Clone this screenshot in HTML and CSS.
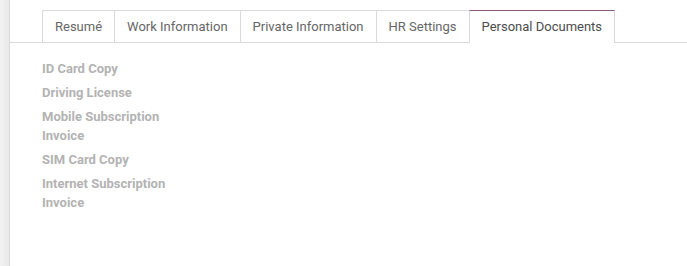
FILE: index.html
```html
<!DOCTYPE html>
<html lang="en">
<head>
    <meta charset="UTF-8">
    <title>Employee - Personal Documents</title>
    <link rel="stylesheet" href="styles.css">
</head>
<body>
    <div class="page">
        <div class="side-strip"></div>
        <div class="sheet">
            <ul class="tabs">
                <li class="tab">Resumé</li>
                <li class="tab">Work Information</li>
                <li class="tab">Private Information</li>
                <li class="tab">HR Settings</li>
                <li class="tab active">Personal Documents</li>
            </ul>
            <div class="tab-pane">
                <div class="doc-label">ID Card Copy</div>
                <div class="doc-label">Driving License</div>
                <div class="doc-label">Mobile Subscription Invoice</div>
                <div class="doc-label">SIM Card Copy</div>
                <div class="doc-label">Internet Subscription Invoice</div>
            </div>
        </div>
    </div>
</body>
</html>
```

FILE: styles.css
```css
body {
    margin: 0;
    font-family: Roboto, 'Noto Sans', sans-serif;
    background-color: #fff;
}
.page {
    display: flex;
    height: 266px;
}
.side-strip {
    width: 9px;
    background: linear-gradient(to right, #f2f2f2, #e9e9e9);
    border-right: 1px solid #d9d9d9;
}
.sheet {
    flex: 1;
    background-color: #fff;
    padding-top: 10px;
}
.tabs {
    display: flex;
    list-style: none;
    margin: 0;
    padding: 0 0 0 32px;
    border-bottom: 1px solid #d8dadd;
}
.tab {
    font-size: 13px;
    color: #666;
    height: 31px;
    line-height: 32px;
    padding: 0 12px;
    border: 1px solid #d8dadd;
    border-bottom: none;
    margin-left: -1px;
    margin-bottom: -1px;
    background-color: #fff;
}
.tab:first-child {
    margin-left: 0;
}
.tab.active {
    color: #4c4c4c;
    border-top-color: #875a7b;
    height: 32px;
    position: relative;
    z-index: 1;
}
.tab-pane {
    padding: 16px 0 0 32px;
    display: flex;
    flex-direction: column;
    gap: 5px;
}
.doc-label {
    font-size: 13px;
    font-weight: bold;
    color: #b3b3b3;
    line-height: 19px;
    width: 130px;
}
```
